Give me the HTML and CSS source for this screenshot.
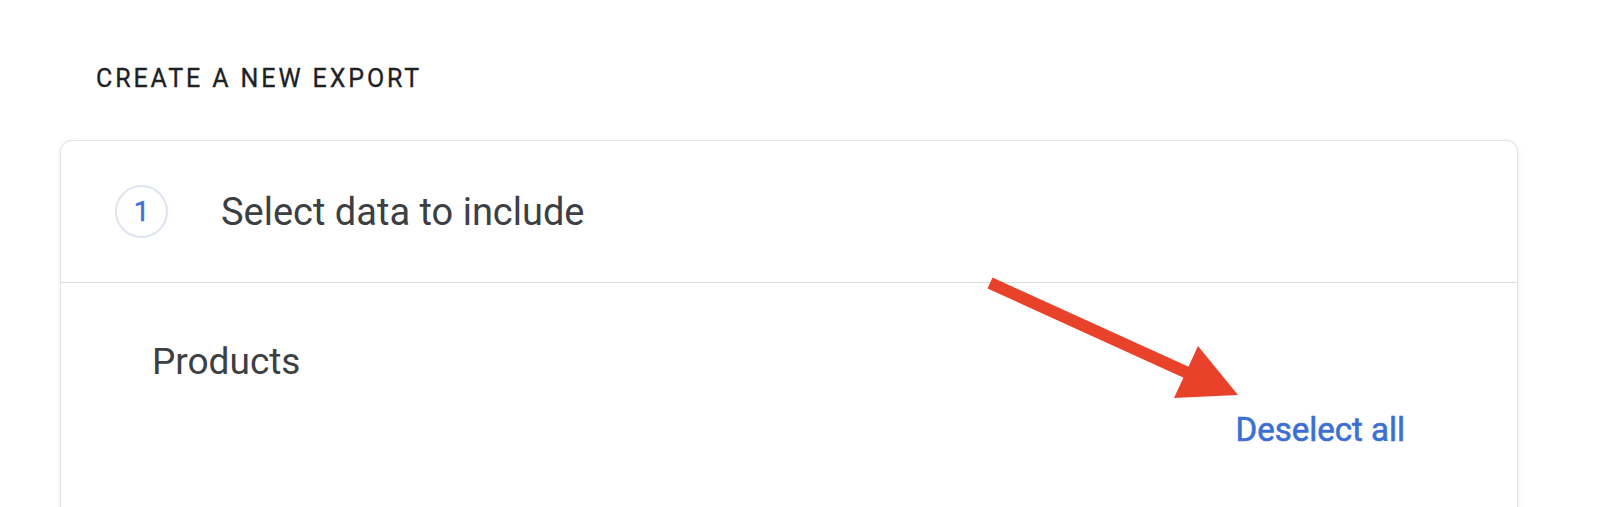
FILE: index.html
```html
<!DOCTYPE html>
<html lang="en">
<head>
    <meta charset="UTF-8">
    <title>Create a new export</title>
    <link rel="stylesheet" href="styles.css">
</head>
<body>

    <!-- Page -->
    <div class="page">
        <h2 class="section-title">CREATE A NEW EXPORT</h2>

        <!-- Export card -->
        <div class="card">
            <div class="step-header">
                <div class="step-num">1</div>
                <div class="step-title">Select data to include</div>
            </div>

            <div class="step-body">
                <div class="products-label">Products</div>
                <div class="actions">
                    <a class="link-btn" href="#">Deselect all</a>
                </div>
            </div>
        </div>
    </div>

    <!-- Annotation arrow -->
    <svg class="annotation" width="1600" height="507" viewBox="0 0 1600 507">
        <line x1="990" y1="283" x2="1190" y2="374" stroke="#e8432a" stroke-width="12"/>
        <polygon points="1198,346 1174,398 1238,395" fill="#e8432a"/>
    </svg>

</body>
</html>
```

FILE: styles.css
```css
/* General Body Styling */
body {
    margin: 0;
    height: 507px;
    overflow: hidden;
    background: #ffffff;
    font-family: 'Roboto', 'Liberation Sans', sans-serif;
    position: relative;
}

.page {
    padding: 64px 82px 0 60px;
}

/* Section heading */
.section-title {
    margin: 0 0 46px 36px;
    font-size: 25px;
    line-height: 30px;
    font-weight: 400;
    letter-spacing: 2.9px;
    color: #202124;
    -webkit-text-stroke: 0.3px #202124;
}

/* Card */
.card {
    border: 1px solid #e3e3e3;
    border-radius: 12px;
    box-shadow: 0 1px 4px rgba(60, 64, 67, 0.12);
    background: #fff;
    min-height: 500px;
}

.step-header {
    display: flex;
    align-items: center;
    height: 141px;
    padding-left: 54px;
    border-bottom: 1px solid #dadce0;
}

.step-num {
    width: 49px;
    height: 49px;
    border: 2px solid #dde3f1;
    border-radius: 50%;
    display: flex;
    align-items: center;
    justify-content: center;
    font-size: 28px;
    color: #3b6fd6;
    -webkit-text-stroke: 0.4px #3b6fd6;
}

.step-title {
    margin-left: 53px;
    font-size: 38px;
    color: #3c4043;
}

/* Products section */
.step-body {
    padding: 57px 112px 0 91px;
}

.products-label {
    font-size: 37px;
    line-height: 44px;
    color: #3c4043;
}

.actions {
    display: flex;
    justify-content: flex-end;
    margin-top: 26px;
}

.link-btn {
    font-size: 33px;
    line-height: 40px;
    font-weight: 400;
    color: #3b6fd6;
    text-decoration: none;
    -webkit-text-stroke: 0.6px #3b6fd6;
}

/* Arrow overlay */
.annotation {
    position: absolute;
    top: 0;
    left: 0;
    pointer-events: none;
}
```
